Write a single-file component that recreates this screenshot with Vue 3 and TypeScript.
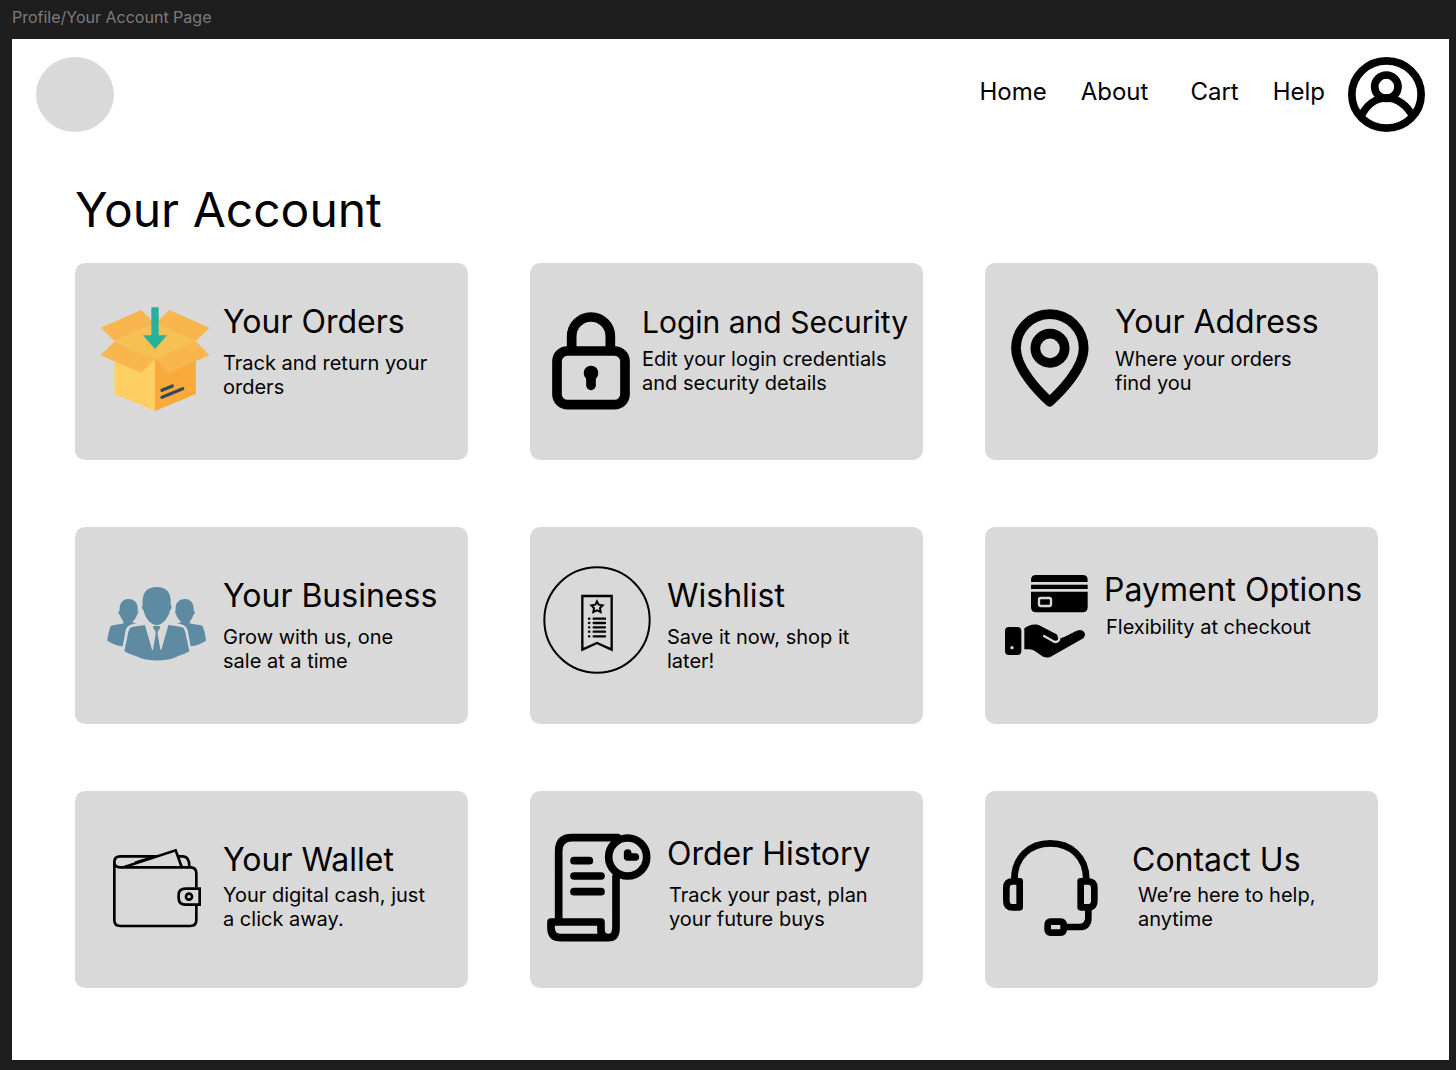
<script setup lang="ts">
interface Card {
  id: string
  title: string
  text: string
  /** Width of the icon column in pixels; the artwork is drawn at three units per pixel. */
  iconWidth: number
  originX: number
  originY: number
}

const navLinks: string[] = ['Home', 'About', 'Cart', 'Help']

const cards: Card[] = [
  { id: 'orders', title: 'Your Orders', text: 'Track and return your orders', iconWidth: 148, originX: -45, originY: 24 },
  { id: 'login', title: 'Login and Security', text: 'Edit your login credentials and security details', iconWidth: 112, originX: -30, originY: 9 },
  { id: 'address', title: 'Your Address', text: 'Where your orders find you', iconWidth: 130, originX: -45, originY: 9 },
  { id: 'business', title: 'Your Business', text: 'Grow with us, one sale at a time', iconWidth: 148, originX: -60, originY: -24 },
  { id: 'wishlist', title: 'Wishlist', text: 'Save it now, shop it later!', iconWidth: 137, originX: -15, originY: 21 },
  { id: 'payment', title: 'Payment Options', text: 'Flexibility at checkout', iconWidth: 119, originX: -30, originY: 6 },
  { id: 'wallet', title: 'Your Wallet', text: 'Your digital cash, just a click away.', iconWidth: 148, originX: -75, originY: -27 },
  { id: 'history', title: 'Order History', text: 'Track your past, plan your future buys', iconWidth: 137, originX: -15, originY: 18 },
  { id: 'contact', title: 'Contact Us', text: 'We’re here to help, anytime', iconWidth: 147, originX: -15, originY: 3 },
]

const viewBox = (card: Card): string =>
  `${card.originX} ${card.originY} ${card.iconWidth * 3} 360`
</script>

<template>
  <div class="page">
    <p class="frame-label">Profile/Your Account Page</p>
    <div class="frame">
      <header class="header">
        <a class="logo" href="#" aria-label="Start page"></a>
        <nav class="nav" aria-label="Main">
          <a v-for="link in navLinks" :key="link" class="nav-link" href="#">{{ link }}</a>
        </nav>
        <a class="avatar" href="#" aria-label="Profile">
          <svg viewBox="0 0 231 225" width="77" height="75" fill="none" stroke="#000" stroke-width="23" aria-hidden="true">
            <ellipse cx="115.500" cy="112.500" rx="104" ry="101" />
            <circle cx="115" cy="89" r="35" />
            <path d="M39 178 C55 145 82 123 115 123 C148 123 178 145 194 178" />
          </svg>
        </a>
      </header>

      <main class="main">
        <h1 class="title">Your Account</h1>
        <div class="grid">
          <a v-for="card in cards" :key="card.id" class="card" :class="card.id" href="#">
            <svg class="icon" :viewBox="viewBox(card)" :width="card.iconWidth" height="120" aria-hidden="true">
              <g v-if="card.id === 'orders'">
                <path fill="#f6c052" d="M74 139 L195 86 L317 139 L195 192Z" />
                <path fill="#ffcf63" d="M73 139 L195 192 V348 L73 297Z" />
                <path fill="#faaa3b" d="M317 139 L195 192 V348 L318 297Z" />
                <path fill="#f9b64e" d="M32 98 L154 45 L195 86 L74 139Z M359 98 L238 45 L195 86 L317 139Z M74 139 L195 192 L154 233 L32 181Z M317 139 L195 192 L238 233 L359 181Z" />
                <path fill="#27b29b" d="M184 37 H206 V121 H231 L195 162 L159 121 H184Z" />
                <path stroke="#34495e" stroke-width="10" stroke-linecap="round" d="M216 286 L247 273 M216 307 L278 281" />
              </g>

              <g v-else-if="card.id === 'login'" fill="none" stroke="#000" stroke-width="29">
                <rect x="51" y="153" width="204" height="161" rx="31" />
                <path d="M95 150 V109 A58 58 0 0 1 211 109 V150" />
                <circle cx="153" cy="219" r="22" fill="#000" stroke="none" />
                <path d="M153 222 V256" stroke-linecap="round" />
              </g>

              <g v-else-if="card.id === 'address'" fill="none" stroke="#000" stroke-width="29" stroke-linejoin="round">
                <path d="M149 305 C118 277 48 206 48 145 A101 102 0 0 1 251 145 C251 206 180 277 149 305Z" />
                <circle cx="150" cy="145" r="44" />
              </g>

              <g v-else-if="card.id === 'business'" fill="#5f8ba2">
                <path d="M74 108 C68 108 70 116 75 121 C80 134 86 138 86 145 C76 149 58 149 47 153 C43 165 38 181 37 197 C51 205 66 213 83 214 L92 166 C95 152 110 147 126 145 C115 144 112 143 113 139 C120 134 124 125 126 119 C131 114 130 108 128 106 C130 84 119 72 100 72 C81 72 72 87 74 108Z" />
                <path d="M296 108 C302 108 300 116 295 121 C290 134 284 138 284 145 C294 149 312 149 323 153 C327 165 332 181 333 197 C319 205 304 213 287 214 L278 166 C275 152 260 147 244 145 C255 144 258 143 257 139 C250 134 246 125 244 119 C239 114 240 108 242 106 C240 84 251 72 270 72 C289 72 298 87 296 108Z" />
                <path d="M143 90 C139 92 140 101 146 107 C151 129 166 149 185 150 C204 149 219 129 225 107 C231 101 231 92 227 90 C230 54 216 36 185 36 C154 36 140 54 143 90Z" />
                <path d="M151 150 L180 158 H190 L220 150 C236 152 252 154 262 157 C268 159 271 171 273 181 L283 229 C267 238 253 241 239 248 C210 259 162 259 134 248 C119 241 103 238 88 229 L98 181 C100 171 103 159 109 157 C121 153 138 152 151 150Z" />
                <path fill="#d9d9d9" d="M150 151 L163 146 L176 155 L181 168 L182 176 L174 224 H171Z M220 151 L207 146 L194 155 L189 168 L188 176 L196 224 H199Z" />
                <path d="M174 154 Q185 150 196 154 L195 160 L189 168 H181 L175 160Z" />
              </g>

              <g v-else-if="card.id === 'wishlist'" fill="none" stroke="#000" stroke-width="6">
                <circle cx="186" cy="180" r="158" />
                <path stroke-width="7" d="M142 108 H230 V269 L186 249 L142 269Z" />
                <path stroke-width="6" d="M186 124 L191 134 L203 136 L195 144 L197 156 L186 151 L175 156 L177 144 L169 136 L181 134Z" />
                <path stroke-width="7" stroke-linecap="round" d="M176 176 H210 M176 189 H210 M176 202 H210 M176 215 H210 M176 229 H210 M162 176 H163 M162 189 H163 M162 202 H163 M162 215 H163 M162 229 H163" />
              </g>

              <g v-else-if="card.id === 'payment'">
                <path d="M108 51 V45 Q108 30 123 30 H263 Q278 30 278 45 V51Z M108 59 H278 V72 H108Z M108 80 H278 V127 Q278 142 263 142 H123 Q108 142 108 127Z" />
                <rect x="132" y="99" width="36" height="24" rx="5" fill="none" stroke="#d9d9d9" stroke-width="7" />
                <rect x="30" y="186" width="49" height="84" rx="12" />
                <circle cx="51" cy="248" r="5" fill="#d9d9d9" />
                <path d="M88 190 C102 181 119 174 137 183 L183 207 C190 211 190 219 195 219 C211 217 230 203 246 197 C264 190 278 207 265 220 L171 273 C160 280 148 279 138 271 C126 263 116 253 103 253 H88Z" />
                <path fill="none" stroke="#d9d9d9" stroke-width="7" stroke-linecap="round" d="M147 213 L175 229 C188 235 197 224 191 213" />
              </g>

              <g v-else-if="card.id === 'wallet'" fill="none" stroke="#000" stroke-width="8">
                <path d="M289 142 V100 Q289 82 271 82 H61 Q43 82 43 66 Q43 49 61 49 H170 M43 66 V241 Q43 258 61 258 H271 Q289 258 289 241 V195" />
                <path d="M73 81 L227 31 L245 81 M234 49 H250 Q268 50 268 80" />
                <path d="M105 68 L160 51" />
                <path d="M299 146 H257 Q236 146 236 165 V175 Q236 194 257 194 H299Z" />
                <circle cx="267" cy="170" r="9" />
              </g>

              <g v-else-if="card.id === 'history'" fill="none" stroke="#000" stroke-width="23" stroke-linecap="round" stroke-linejoin="round">
                <path d="M71 285 V78 Q71 38 111 38 H248 M243 155 V308 Q243 338 220 338 Q198 338 198 315 V291 H48 V308 Q48 338 78 338 H220" />
                <circle cx="278" cy="96" r="57" />
                <path d="M117 107 H163 M117 153 H198 M117 200 H198 M278 84 V96 H301" />
              </g>

              <g v-else fill="none" stroke="#000" stroke-width="20" stroke-linejoin="round">
                <path d="M73 154 V149 C73 80 121 40 181 40 C241 40 289 80 289 149 V154" />
                <path d="M89 154 H68 Q49 154 49 174 V212 Q49 232 68 232 H89Z M272 154 H294 Q313 154 313 174 V212 Q313 232 294 232 H272Z" />
                <path d="M295 235 V263 Q295 291 267 291 H225" />
                <rect x="173" y="275" width="48" height="33" rx="8" />
              </g>
            </svg>
            <div class="copy">
              <h2 class="card-title">{{ card.title }}</h2>
              <p class="card-text">{{ card.text }}</p>
            </div>
          </a>
        </div>
      </main>
    </div>
  </div>
</template>

<style>
body {
  margin: 0;
  background: #1e1e1e;
}
</style>

<style scoped>
.page {
  box-sizing: border-box;
  display: flex;
  flex-direction: column;
  min-height: 100vh;
  padding: 7px 7px 10px 12px;
  background: #1e1e1e;
  color: #000;
  font-family: Inter, "Liberation Sans", sans-serif;
}

a {
  color: inherit;
  text-decoration: none;
}

.frame-label {
  margin: 0 0 12px;
  color: #7c7c7c;
  font-size: 16px;
  line-height: 20px;
}

.frame {
  flex: 1;
  background: #fff;
}

.header {
  display: flex;
  align-items: center;
  padding: 18px 24px 0;
}

.logo {
  width: 78px;
  height: 75px;
  border-radius: 50%;
  background: #d9d9d9;
}

.nav {
  display: flex;
  gap: 34px;
  margin: 0 23px 6px auto;
  font-size: 24px;
  line-height: 30px;
}

.nav-link:nth-child(3) {
  margin-left: 8px;
}

.avatar svg {
  display: block;
}

.main {
  padding: 49px 71px 72px 63px;
}

.title {
  margin: 0 0 24px;
  font-size: 48px;
  font-weight: 400;
  line-height: 58px;
}

.grid {
  display: grid;
  grid-template-columns: repeat(3, minmax(0, 1fr));
  gap: 67px 62px;
}

.card {
  --copy-top: 39px;
  --copy-gap: 9px;
  --copy-indent: 0px;
  --copy-width: 210px;
  --title-size: 32px;
  display: flex;
  align-items: flex-start;
  min-height: 197px;
  border-radius: 10px;
  background: #d9d9d9;
}

.icon {
  flex: none;
  margin-top: 40px;
  overflow: visible;
}

.copy {
  flex: 1;
  padding-top: var(--copy-top);
}

.card-title {
  margin: 0;
  font-size: var(--title-size);
  font-weight: 400;
  line-height: 40px;
  white-space: nowrap;
}

.card-text {
  max-width: var(--copy-width);
  margin: var(--copy-gap) 0 0 var(--copy-indent);
  font-size: 20px;
  line-height: 24px;
}

.login {
  --copy-gap: 5px;
  --copy-width: 250px;
  --title-size: 30px;
}

.address {
  --copy-gap: 5px;
}

.business,
.wishlist,
.wallet,
.contact {
  --copy-top: 49px;
}

.payment,
.history {
  --copy-top: 43px;
  --copy-indent: 2px;
}

.payment {
  --copy-gap: 5px;
}

.wallet,
.contact {
  --copy-gap: 3px;
}

.contact {
  --copy-indent: 6px;
}
</style>
